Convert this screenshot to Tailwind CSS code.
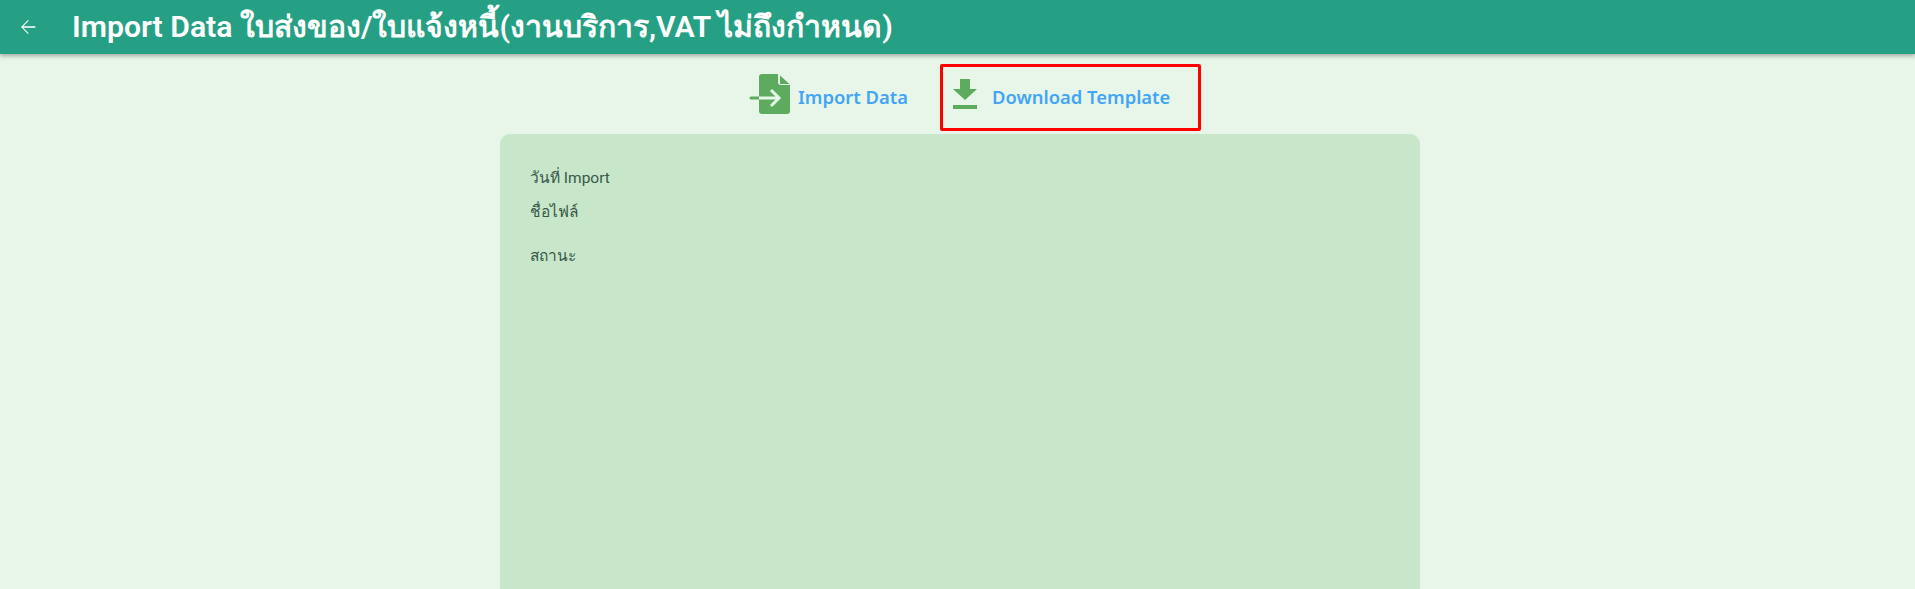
<!DOCTYPE html>
<html lang="th">
<head>
    <meta charset="UTF-8">
    <title>Import Data</title>
    <script src="https://cdn.jsdelivr.net/npm/@tailwindcss/browser@4"></script>
</head>
<body class="h-[589px] overflow-hidden bg-[#e8f5e9] font-['Roboto','Noto_Sans',sans-serif] text-[#37594a]">
    <header class="flex h-[54px] items-center bg-[#26a085] pl-[17px] text-white shadow-[0_2px_4px_rgba(0,0,0,0.3)]">
        <svg class="h-[22px] w-[22px]" viewBox="0 0 24 24" fill="currentColor"><path d="M20 11.200H6.800l6-6L12 4.400 4.400 12l7.600 7.600.8-.8-6-6H20z"/></svg>
        <h1 class="ml-[33px] text-[30.200px] leading-none font-semibold">Import Data ใบส่งของ/ใบแจ้งหนี้(งานบริการ,VAT ไม่ถึงกำหนด)</h1>
    </header>

    <div class="flex h-[80px] items-start pt-[10px] pl-[749px]">
        <button class="flex h-[67px] items-center gap-[7px] pb-[2px] font-['Noto_Sans',sans-serif] text-[18.400px] font-semibold text-[#42a5f5]">
            <svg class="mb-[5px] h-[40px] w-[42px]" viewBox="0 0 42 40">
                <path fill="#5cab5f" d="M13 0h16v8a3 3 0 0 0 3 3h9v26a3 3 0 0 1-3 3H13a3 3 0 0 1-3-3V3a3 3 0 0 1 3-3z"/>
                <path fill="#5cab5f" d="M31 1.500L40.500 10H31z"/>
                <path fill="#5cab5f" d="M0 22.500h10v3H2a1.500 1.500 0 0 1 0-3z"/>
                <path d="M10 24h20M22 16l8 8-8 8" fill="none" stroke="#e8f5e9" stroke-width="3"/>
            </svg>
            Import Data
        </button>
        <button class="ml-[32px] flex h-[67px] w-[261px] items-center gap-[15px] rounded-[2px] border-[3px] border-[#ff0000] pb-[2px] pl-[10px] font-['Noto_Sans',sans-serif] text-[18.400px] font-semibold text-[#42a5f5]">
            <svg class="mb-[5px] h-[30px] w-[24px]" viewBox="0 0 24 30" fill="#5cab5f"><path d="M7 0h10v10h7L12 21 0 10h7zM0 26h24v4H0z"/></svg>
            Download Template
        </button>
    </div>

    <main class="ml-[500px] h-[455px] w-[920px] rounded-t-[10px] bg-[#c8e6c9] px-[30px] pt-[32px]">
        <p class="text-[15.500px] leading-[24px]">วันที่ Import</p>
        <p class="mt-[10px] text-[15.500px] leading-[24px]">ชื่อไฟล์</p>
        <p class="mt-[20px] text-[15.500px] leading-[24px]">สถานะ</p>
    </main>
</body>
</html>
